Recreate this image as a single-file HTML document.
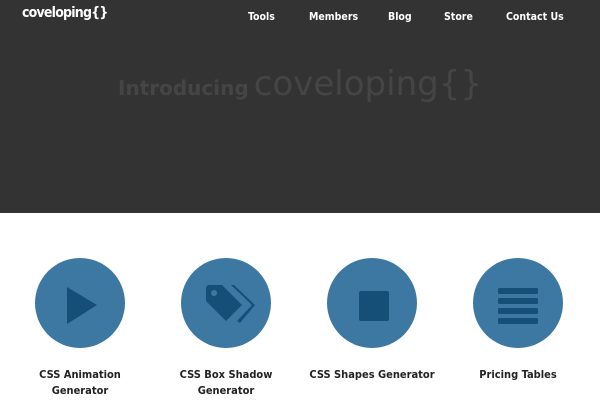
<!DOCTYPE html>
<html><head><style>
body{margin:0;width:600px;height:400px;overflow:hidden;background:#fff;font-family:"DejaVu Sans","Liberation Sans",sans-serif}
.hero{position:absolute;left:0;top:0;width:600px;height:213px;background:#333}
.logo{position:absolute;left:22px;top:5px;color:#fff;font-weight:bold;font-size:14px;font-stretch:condensed;letter-spacing:-0.8px}
.nav{position:absolute;top:11px;color:#fff;font-weight:bold;font-size:10.5px;font-stretch:condensed}
.intro{position:absolute;left:0;width:600px;top:64px;text-align:center;color:#454545;white-space:nowrap}
.c{position:absolute;top:258px;width:90px;height:90px;border-radius:50%;background:#3d78a3}
.lab{position:absolute;top:367px;width:150px;text-align:center;font-weight:bold;font-size:11px;font-stretch:condensed;line-height:16px;color:#222}
</style></head><body>
<div class="hero">
<div class="logo">coveloping{}</div>
<div class="nav" style="left:248px">Tools</div>
<div class="nav" style="left:309px">Members</div>
<div class="nav" style="left:388px">Blog</div>
<div class="nav" style="left:444px">Store</div>
<div class="nav" style="left:506px">Contact Us</div>
<div class="intro"><span style="font-weight:bold;font-size:20px">Introducing</span> <span style="font-size:34px">coveloping{}</span></div>
</div>
<div class="c" style="left:35px"></div>
<div class="c" style="left:181px"></div>
<div class="c" style="left:327px"></div>
<div class="c" style="left:473px"></div>
<svg width="600" height="400" style="position:absolute;left:0;top:0">
<g fill="#154f78">
<polygon points="67,287 97,305 67,324"/>
<path d="M208,285 L222,285 L242,305 L226,321 L206,301 L206,287 Z M214,290 a3,3 0 1 0 0.1,0 Z" fill-rule="evenodd"/>
<polygon points="231,285 234,285 255,305 240,323 237,321 252,305"/>
<rect x="359" y="291" width="30" height="30" rx="2"/>
<rect x="498" y="288" width="40" height="6" rx="1.5"/>
<rect x="498" y="298" width="40" height="6" rx="1.5"/>
<rect x="498" y="308" width="40" height="6" rx="1.5"/>
<rect x="498" y="318" width="40" height="6" rx="1.5"/>
</g></svg>
<div class="lab" style="left:5px">CSS Animation<br>Generator</div>
<div class="lab" style="left:151px">CSS Box Shadow<br>Generator</div>
<div class="lab" style="left:297px">CSS Shapes Generator</div>
<div class="lab" style="left:443px">Pricing Tables</div>
</body></html>
